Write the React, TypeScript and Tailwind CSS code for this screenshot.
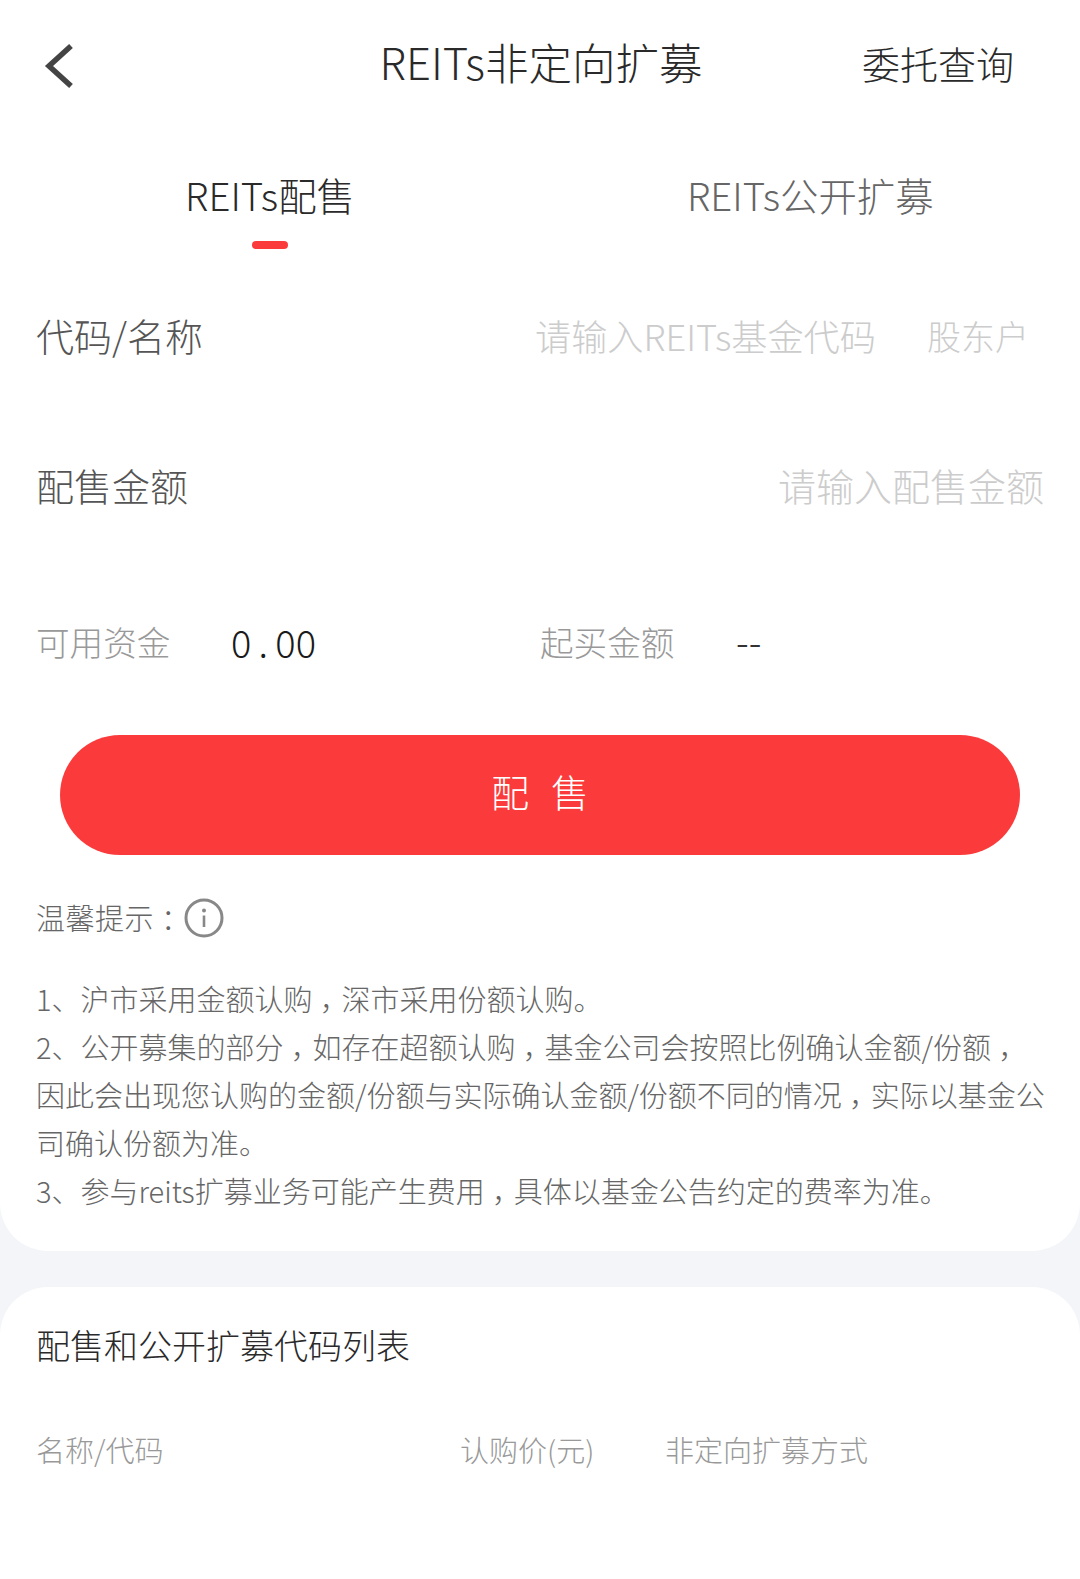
// "，" and "：" sit in the middle of their cell in the reference
function Punct({ children }: { children: string }) {
  return <span className='inline-block w-[1em] text-center [font-feature-settings:"halt"]'>{children}</span>;
}

const NOTES = [
  <>1、沪市采用金额认购<Punct>，</Punct>深市采用份额认购。</>,
  <>2、公开募集的部分<Punct>，</Punct>如存在超额认购<Punct>，</Punct>基金公司会按照比例确认金额/份额<Punct>，</Punct></>,
  <>因此会出现您认购的金额/份额与实际确认金额/份额不同的情况<Punct>，</Punct>实际以基金公</>,
  <>司确认份额为准。</>,
  <>3、参与reits扩募业务可能产生费用<Punct>，</Punct>具体以基金公告约定的费率为准。</>,
];

export default function App() {
  return (
    <div
      className="flex h-[1579px] w-[1080px] flex-col overflow-hidden bg-[#f3f5f8] font-extralight"
      style={{ fontFamily: '"Noto Sans CJK SC", "Noto Sans", sans-serif' }}
    >
      <div className="h-[1251px] rounded-b-[48px] bg-white">
        {/* Header */}
        <div className="relative flex h-[130px] items-center justify-center pb-[6px] text-[#2a2a2a]">
          <svg className="absolute left-[44px] top-[43px] h-[46px] w-[30px]" viewBox="0 0 30 46" fill="none">
            <path d="M27 3 L5 23 L27 43" stroke="#444" strokeWidth="5.5" />
          </svg>
          <span className="ml-[2px] text-[43.5px]">REITs非定向扩募</span>
          <span className="absolute left-[862px] text-[38px]">委托查询</span>
        </div>

        {/* Tabs */}
        <div className="flex h-[130px] pt-[36px] text-[38.4px]">
          <div className="flex w-[540px] flex-col items-center">
            <span className="text-[#2a2a2a]">REITs配售</span>
            <span className="mt-[17px] h-[8px] w-[36px] rounded-full bg-[#fb3b3b]" />
          </div>
          <div className="flex-1 pl-[147px] text-[#666]">REITs公开扩募</div>
        </div>

        {/* Form */}
        <div className="flex h-[150px] items-center justify-between pb-[2px] pl-[36px] pr-[37px] text-[38px]">
          <span className="text-[#555]">代码/名称</span>
          <div className="flex items-center gap-[51px] pr-[14px] pt-[3px] text-[36.2px] text-[#ccc]">
            <span>请输入REITs基金代码</span>
            <span className="text-[34px]">股东户</span>
          </div>
        </div>
        <div className="flex h-[150px] items-center justify-between pb-[2px] pl-[36px] pr-[36px] text-[38px]">
          <span className="text-[#555]">配售金额</span>
          <span className="text-[#ccc]">请输入配售金额</span>
        </div>

        {/* Funds */}
        <div className="mb-[15px] flex h-[160px] items-center pl-[36px] pt-[4px] text-[33.6px]">
          <span className="w-[195px] text-[#999]">可用资金</span>
          <span className="mt-[-2px] w-[309px] text-[38px] text-[#1a1a1a]">
            0<span className="inline-block w-[24px] text-center">.</span>00
          </span>
          <span className="w-[196px] text-[#999]">起买金额</span>
          <span className="mt-[-5px] text-[38px] text-[#333]">--</span>
        </div>

        <div className="px-[60px]">
          <button className="flex h-[120px] w-full items-center justify-center rounded-full bg-[#fb3b3b] pb-[10px] text-[38px] tracking-[22px] text-white">
            <span className="ml-[22px]">配售</span>
          </button>
        </div>

        {/* Tips */}
        <div className="mt-[42px] flex h-[42px] items-center whitespace-nowrap pl-[36px] text-[29px] tracking-[0.5px] text-[#666]">
          <span>
            温馨提示<Punct>：</Punct>
          </span>
          <svg className="ml-[1px] h-[40px] w-[40px]" viewBox="0 0 40 40" fill="none">
            <circle cx="20" cy="20" r="18" stroke="#888" strokeWidth="3" />
            <circle cx="20" cy="12.5" r="2" fill="#888" />
            <path d="M20 17.5 V29" stroke="#888" strokeWidth="2.6" />
          </svg>
        </div>
        <div className="mt-[35px] whitespace-nowrap pl-[36px] text-[29px] leading-[48px] text-[#666]">
          {NOTES.map((note, i) => (
            <p key={i}>{note}</p>
          ))}
        </div>
      </div>

      {/* Code list */}
      <div className="mt-[36px] flex-1 rounded-t-[48px] bg-white pl-[36px]">
        <div className="pt-[33px] text-[34px] leading-[50px] text-[#2a2a2a]">配售和公开扩募代码列表</div>
        <div className="mt-[57px] flex text-[29px] leading-[44px] text-[#999]">
          <span className="w-[424px]">名称/代码</span>
          <span className="w-[205px]">认购价(元)</span>
          <span>非定向扩募方式</span>
        </div>
      </div>
    </div>
  );
}
